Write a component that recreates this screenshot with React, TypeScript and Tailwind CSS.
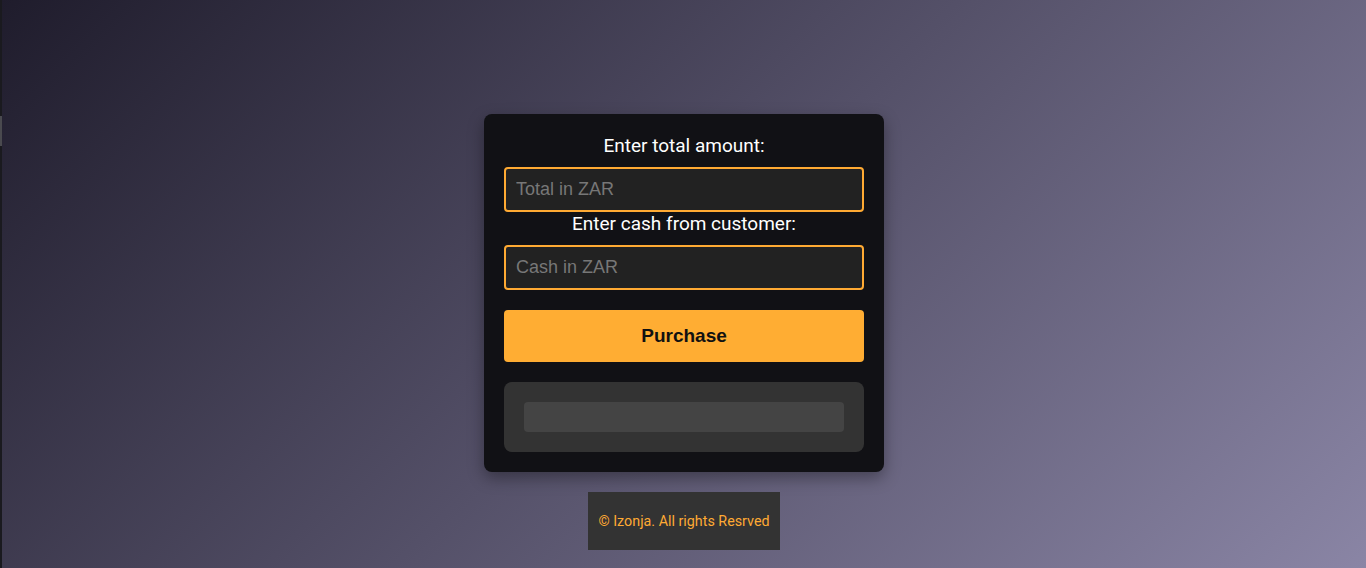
import { useState } from 'react';

export default function App() {
  const [total, setTotal] = useState('');
  const [cash, setCash] = useState('');

  return (
    <div className="flex min-h-[568px] bg-linear-135/srgb from-[#1f1c2c] to-[#8a85a5] font-['Roboto',sans-serif]">
      {/* thin edge strip on the left */}
      <div className="w-[2px] shrink-0 bg-[#1a1a1f]">
        <div className="mt-[116px] h-[30px] w-full bg-[#4a4a4f]" />
      </div>

      <div className="flex flex-1 flex-col items-center pt-[114px]">
        {/* Card */}
        <div className="w-[400px] rounded-lg bg-[#111115] p-5 shadow-[0_6px_16px_rgba(0,0,0,0.35)]">
          <label className="mb-[10px] block pt-px text-center text-[19px] leading-[22px] text-white">Enter total amount:</label>
          <input
            value={total}
            onChange={(e) => setTotal(e.target.value)}
            placeholder="Total in ZAR"
            className="block h-[45px] w-full rounded border-2 border-[#ffaa33] bg-[#222222] px-[10px] font-['Liberation_Sans',sans-serif] text-lg text-white outline-none placeholder:text-[#777777]"
          />
          <label className="mb-[10px] block pt-px text-center text-[19px] leading-[22px] text-white">Enter cash from customer:</label>
          <input
            value={cash}
            onChange={(e) => setCash(e.target.value)}
            placeholder="Cash in ZAR"
            className="block h-[45px] w-full rounded border-2 border-[#ffaa33] bg-[#222222] px-[10px] font-['Liberation_Sans',sans-serif] text-lg text-white outline-none placeholder:text-[#777777]"
          />
          <button className="mt-5 block h-[52px] w-full rounded bg-[#ffad33] font-['Liberation_Sans',sans-serif] text-[19px] font-bold text-[#111111]">
            Purchase
          </button>
          <div className="mt-5 rounded-lg bg-[#333333] p-5">
            <div className="h-[30px] rounded bg-[#444444]" />
          </div>
        </div>

        {/* Footer */}
        <div className="mt-5 flex h-[58px] w-[192px] items-center justify-center bg-[#333333] pt-[2px] text-[14.3px] text-[#ffaa33]">
          © Izonja. All rights Resrved
        </div>
      </div>
    </div>
  );
}
